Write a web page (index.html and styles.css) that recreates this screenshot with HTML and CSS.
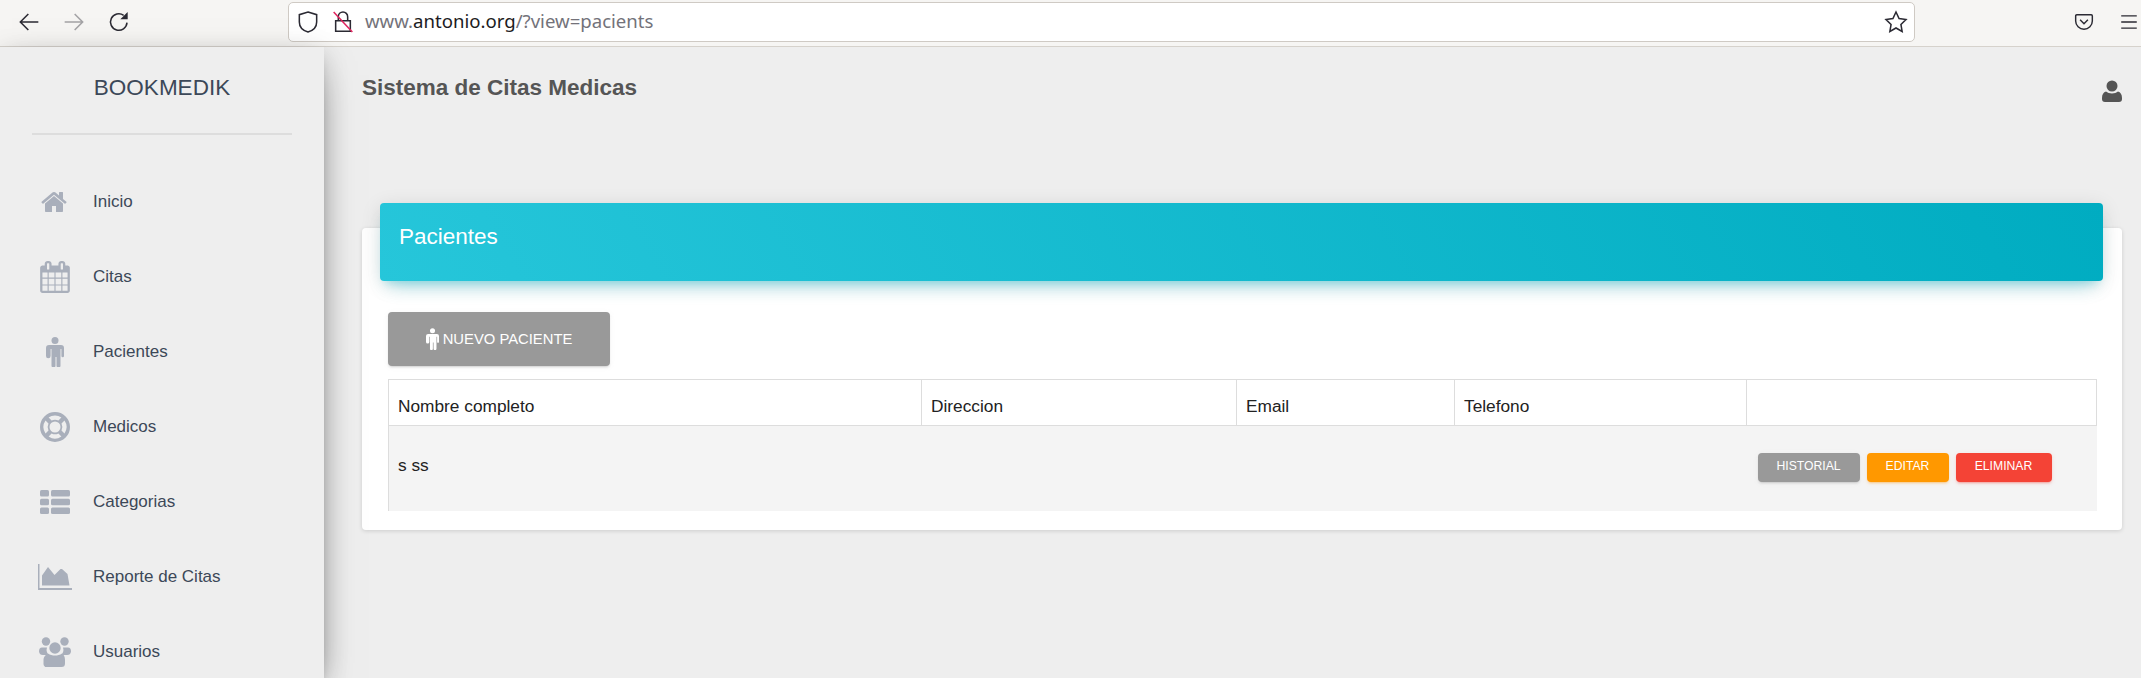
FILE: index.html
```html
<!DOCTYPE html>
<html lang="en">
<head>
    <meta charset="UTF-8">
    <title>BOOKMEDIK</title>
    <link rel="stylesheet" href="styles.css">
</head>
<body>
    <div class="toolbar">
        <div class="nav-btns">
            <svg class="tb-icon" viewBox="0 0 18 18"><path d="M16 9H2.500M8.500 3L2.500 9l6 6"/></svg>
            <svg class="tb-icon faded" viewBox="0 0 18 18"><path d="M2 9h13.500M9.500 3l6 6-6 6"/></svg>
            <svg class="tb-icon" viewBox="0 0 18 18"><path d="M15 9.500A6.200 6.200 0 1 1 12.500 4"/><path class="solid" d="M15.500 1.500v5.500H10z"/></svg>
        </div>
        <div class="urlbar">
            <svg class="tb-icon shield" viewBox="0 0 18 18"><path d="M9 1.500l6.500 2v5.500c0 4-3 6.500-6.500 7.500-3.500-1-6.500-3.500-6.500-7.500V3.500z"/></svg>
            <svg class="tb-icon lock" viewBox="0 0 18 18"><path d="M5.500 8V5a3.500 3.500 0 0 1 7 0v3M3.500 8h11v8h-11z"/><path class="slash" d="M2 1.500l14 15"/></svg>
            <div class="url"><span class="url-dim">www.</span>antonio.org<span class="url-dim">/?view=pacients</span></div>
            <svg class="tb-icon star" viewBox="0 0 18 18"><path d="M9 1.500l2.300 4.900 5.200.7-3.800 3.700.9 5.300L9 13.500l-4.600 2.600.9-5.300L1.500 7.100l5.200-.7z"/></svg>
        </div>
        <div class="tb-right">
            <svg class="tb-icon small" viewBox="0 0 18 18"><path d="M2.500 2.500h13a1 1 0 0 1 1 1V8a7.500 7.500 0 0 1-15 0V3.500a1 1 0 0 1 1-1zM5.500 7L9 10.500 12.500 7"/></svg>
            <svg class="tb-icon small" viewBox="0 0 18 18"><path d="M2 3.500h14M2 9h14M2 14.500h14"/></svg>
        </div>
    </div>

    <div class="app">
        <div class="sidebar">
            <div class="logo">BOOKMEDIK</div>
            <ul class="menu">
                <li>
                    <span class="ico"><svg width="28" height="28" viewBox="0 0 1792 1792"><path d="M1408 992v480q0 26-19 45t-45 19h-384v-384h-256v384h-384q-26 0-45-19t-19-45v-480q0-1 .5-3t.5-3l575-474 575 474q1 2 1 6zm223-69l-62 74q-8 9-21 11h-3q-13 0-21-7l-692-577-692 577q-12 8-24 7-13-2-21-11l-62-74q-8-10-7-23.5t11-21.5l719-599q32-26 76-26t76 26l244 204v-195q0-14 9-23t23-9h192q14 0 23 9t9 23v408l219 182q10 8 11 21.5t-7 23.5z"/></svg></span>
                    Inicio
                </li>
                <li>
                    <span class="ico"><svg width="32" height="32" viewBox="0 0 1792 1792"><path d="M192 1664h288v-288h-288v288zm352 0h320v-288h-320v288zm-352-352h288v-320h-288v320zm352 0h320v-320h-320v320zm-352-384h288v-288h-288v288zm736 736h320v-288h-320v288zm-384-736h320v-288h-320v288zm768 736h288v-288h-288v288zm-384-352h320v-320h-320v320zm-352-864v-288q0-13-9.500-22.500t-22.500-9.500h-64q-13 0-22.500 9.500t-9.500 22.500v288q0 13 9.500 22.500t22.500 9.500h64q13 0 22.500-9.500t9.500-22.500zm736 864h288v-320h-288v320zm-384-384h320v-288h-320v288zm384 0h288v-288h-288v288zm32-480v-288q0-13-9.500-22.500t-22.500-9.500h-64q-13 0-22.500 9.500t-9.500 22.500v288q0 13 9.500 22.500t22.500 9.500h64q13 0 22.500-9.500t9.500-22.500zm384-64v1280q0 52-38 90t-90 38h-1408q-52 0-90-38t-38-90v-1280q0-52 38-90t90-38h128v-96q0-66 47-113t113-47h64q66 0 113 47t47 113v96h384v-96q0-66 47-113t113-47h64q66 0 113 47t47 113v96h128q52 0 90 38t38 90z"/></svg></span>
                    Citas
                </li>
                <li>
                    <span class="ico"><svg width="18" height="30" viewBox="0 0 18 30"><circle cx="9" cy="3.500" r="3.500"/><path d="M3 8h12a3 3 0 0 1 3 3v8a1.300 1.300 0 0 1-2.600 0v-7h-.9v16.500a1.500 1.500 0 0 1-4 0V20h-1v8.500a1.500 1.500 0 0 1-4 0V12h-.9v7A1.300 1.300 0 0 1 0 19v-8a3 3 0 0 1 3-3z"/></svg></span>
                    Pacientes
                </li>
                <li>
                    <span class="ico"><svg width="30" height="30" viewBox="0 0 30 30"><path fill-rule="evenodd" d="M15 0a15 15 0 1 1 0 30 15 15 0 0 1 0-30zm0 3.500c-2.400 0-4.600.7-6.400 2l3 3a7.600 7.600 0 0 1 6.800 0l3-3a11.400 11.400 0 0 0-6.400-2zM5.500 8.600a11.400 11.400 0 0 0 0 12.800l3-3a7.600 7.600 0 0 1 0-6.800zm19 0l-3 3a7.600 7.600 0 0 1 0 6.800l3 3a11.400 11.400 0 0 0 0-12.800zM11.600 21.500l-3 3a11.400 11.400 0 0 0 12.800 0l-3-3a7.600 7.600 0 0 1-6.800 0zM15 9.500a5.500 5.500 0 1 0 0 11 5.500 5.500 0 0 0 0-11z"/></svg></span>
                    Medicos
                </li>
                <li>
                    <span class="ico"><svg width="30" height="24" viewBox="0 0 30 24"><rect width="9" height="6.500" rx="1.500"/><rect x="11" width="19" height="6.500" rx="1.500"/><rect y="8.700" width="9" height="6.500" rx="1.500"/><rect x="11" y="8.700" width="19" height="6.500" rx="1.500"/><rect y="17.400" width="9" height="6.500" rx="1.500"/><rect x="11" y="17.400" width="19" height="6.500" rx="1.500"/></svg></span>
                    Categorias
                </li>
                <li>
                    <span class="ico"><svg width="34" height="26" viewBox="0 0 34 26"><path d="M0 0h1.500v24H34v2H0z"/><path d="M4 21.500v-10L10 3l6.500 8 6-6 1.500 0 5.500 5 2 11.500z"/></svg></span>
                    Reporte de Citas
                </li>
                <li>
                    <span class="ico"><svg width="32" height="30" viewBox="0 0 32 30"><circle cx="7" cy="4.500" r="4.200"/><circle cx="25.500" cy="4.500" r="4.200"/><circle cx="16" cy="11" r="5.700"/><path d="M3 10.500h5a7.500 7.500 0 0 0 1.800 7.500H4a4 4 0 0 1-4-3.500C0 12 1 10.500 3 10.500zM24 10.500h5c2 0 3 1.500 3 4a4 4 0 0 1-4 3.500h-5.800A7.500 7.500 0 0 0 24 10.500z"/><path d="M9 16.500c2 1.500 4.500 2 7 2s5-.5 7-2c1.500.5 3 3 3 6.500v3.500a3.500 3.500 0 0 1-3.500 3.500h-13A3.500 3.500 0 0 1 4.500 26.500V23c0-3.500 3-6 4.500-6.500z"/></svg></span>
                    Usuarios
                </li>
            </ul>
        </div>

        <div class="main">
            <div class="topnav">
                <div class="brand">Sistema de Citas Medicas</div>
                <svg class="user" width="20" height="22" viewBox="0 0 20 22"><circle cx="10" cy="6" r="5.500"/><path d="M4 11.500c1.500 1.300 3.700 2 6 2s4.500-.7 6-2c2.500.5 4 3 4 6.500v1a3 3 0 0 1-3 3H3a3 3 0 0 1-3-3v-1c0-3.500 1.500-6 4-6.500z"/></svg>
            </div>

            <div class="card">
                <div class="card-header">Pacientes</div>
                <div class="card-body">
                    <a class="btn btn-big">
                        <svg width="13" height="22" viewBox="0 0 18 30"><circle cx="9" cy="3.500" r="3.500"/><path d="M3 8h12a3 3 0 0 1 3 3v8a1.300 1.300 0 0 1-2.600 0v-7h-.9v16.500a1.500 1.500 0 0 1-4 0V20h-1v8.500a1.500 1.500 0 0 1-4 0V12h-.9v7A1.300 1.300 0 0 1 0 19v-8a3 3 0 0 1 3-3z"/></svg>
                        NUEVO PACIENTE
                    </a>
                    <table class="tbl">
                        <colgroup>
                            <col class="c1"><col class="c2"><col class="c3"><col class="c4"><col>
                        </colgroup>
                        <thead>
                            <tr>
                                <th>Nombre completo</th>
                                <th>Direccion</th>
                                <th>Email</th>
                                <th>Telefono</th>
                                <th></th>
                            </tr>
                        </thead>
                        <tbody>
                            <tr>
                                <td class="first">s ss</td>
                                <td></td>
                                <td></td>
                                <td></td>
                                <td class="actions">
                                    <a class="btn btn-sm grey">HISTORIAL</a>
                                    <a class="btn btn-sm orange">EDITAR</a>
                                    <a class="btn btn-sm red">ELIMINAR</a>
                                </td>
                            </tr>
                        </tbody>
                    </table>
                </div>
            </div>
        </div>
    </div>
</body>
</html>
```

FILE: styles.css
```css
* {
    box-sizing: border-box;
    margin: 0;
    padding: 0;
}
html, body {
    height: 100%;
    overflow: hidden;
}
body {
    background-color: #eeeeee;
    font-family: "Liberation Sans", Arial, sans-serif;
    display: flex;
    flex-direction: column;
}

/* browser bar */
.toolbar {
    height: 47px;
    flex: none;
    background-color: #f6f5f3;
    border-bottom: 1px solid #d6d2cc;
    display: flex;
    align-items: center;
    padding-left: 17px;
    padding-bottom: 3px;
}
.tb-icon {
    width: 24px;
    height: 24px;
    fill: none;
    stroke: #2b2a33;
    stroke-width: 1.15;
    flex: none;
}
.tb-icon.small {
    width: 20px;
    height: 20px;
    stroke-width: 1.3;
}
.tb-icon .solid {
    fill: #2b2a33;
    stroke: none;
}
.tb-icon .slash {
    stroke: #e0245e;
}
.faded {
    opacity: 0.4;
}
.nav-btns {
    display: flex;
    gap: 21px;
    width: 271px;
}
.urlbar {
    width: 1627px;
    height: 40px;
    background: #fff;
    border: 1px solid #cfcac4;
    border-radius: 5px;
    display: flex;
    align-items: center;
    padding: 0 6px 0 7px;
}
.shield {
    margin-right: 11px;
}
.lock {
    margin-right: 10px;
}
.url {
    flex: 1;
    font-family: "Noto Sans", sans-serif;
    font-size: 18.6px;
    color: #1c1b22;
    margin-bottom: 2px;
}
.url-dim {
    color: #73727a;
}
.tb-right {
    display: flex;
    gap: 25px;
    margin-left: 159px;
}

/* layout */
.app {
    flex: 1;
    display: flex;
    min-height: 0;
}
.sidebar {
    width: 324px;
    flex: none;
    background-color: #eeeeee;
    box-shadow: 0 16px 38px -12px rgba(0,0,0,.56), 0 4px 25px 0 rgba(0,0,0,.12), 0 8px 10px -5px rgba(0,0,0,.2);
    position: relative;
    padding: 0 32px;
}
.logo {
    height: 88px;
    padding-top: 27px;
    border-bottom: 2px solid #dddddd;
    text-align: center;
    font-size: 22.5px;
    line-height: 28px;
    color: #3c4858;
}
.menu {
    list-style: none;
    margin: 29px 0 0 -32px;
}
.menu li {
    height: 75px;
    display: flex;
    align-items: center;
    font-size: 17px;
    color: #3c4858;
}
.ico {
    width: 110px;
    margin-right: -17px;
    display: flex;
    justify-content: center;
    flex: none;
}
.ico svg {
    fill: #a9afbb;
}
.main {
    flex: 1;
    padding: 0 19px 0 38px;
}
.topnav {
    height: 82px;
    display: flex;
    justify-content: space-between;
    align-items: flex-start;
}
.brand {
    font-size: 22.5px;
    font-weight: bold;
    color: #555555;
    line-height: 28px;
    margin-top: 27px;
}
.user {
    fill: #555555;
    margin-top: 33px;
}

/* card */
.card {
    margin-top: 99px;
    height: 302px;
    background: #fff;
    border-radius: 4px;
    box-shadow: 0 1px 4px 0 rgba(0,0,0,.14);
    padding: 0 19px 0 18px;
}
.card-header {
    position: relative;
    top: -25px;
    margin-bottom: -25px;
    height: 78px;
    padding: 20px 19px;
    border-radius: 4px;
    background: linear-gradient(60deg, #26c6da, #00acc1);
    box-shadow: 0 12px 20px -10px rgba(0,188,212,.4), 0 4px 20px 0 rgba(0,0,0,.12), 0 7px 8px -5px rgba(0,188,212,.2);
    color: #fff;
    font-size: 22.5px;
    line-height: 28px;
}
.card-body {
    padding: 31px 6px 0 8px;
}
.btn {
    display: inline-flex;
    align-items: center;
    justify-content: center;
    color: #fff;
    border-radius: 4px;
    background-color: #999999;
    box-shadow: 0 2px 2px 0 rgba(153,153,153,.14), 0 3px 1px -2px rgba(153,153,153,.2), 0 1px 5px 0 rgba(153,153,153,.12);
}
.btn-big {
    width: 222px;
    height: 54px;
    font-size: 14.8px;
    gap: 4px;
}
.btn-big svg {
    fill: #fff;
}
.tbl {
    width: 100%;
    margin-top: 13px;
    border-collapse: collapse;
    table-layout: fixed;
    font-size: 17.3px;
    color: #222222;
}
.c1 { width: 533px; }
.c2 { width: 315px; }
.c3 { width: 218px; }
.c4 { width: 292px; }
.tbl th {
    height: 46px;
    border: 1px solid #dddddd;
    font-weight: normal;
    text-align: left;
    padding: 0 9px 8px;
    vertical-align: bottom;
}
.tbl td {
    height: 85px;
    background-color: #f4f4f4;
    padding: 0 9px 5px;
}
.tbl td.first {
    border-left: 1px solid #dddddd;
}
.actions {
    white-space: nowrap;
    font-size: 0;
}
.btn-sm {
    height: 29px;
    font-size: 12.2px;
    padding-bottom: 2px;
    margin-right: 7px;
    margin-top: 3px;
}
.grey {
    width: 102px;
    margin-left: 2px;
}
.orange {
    width: 82px;
    background-color: #ff9800;
    box-shadow: 0 2px 2px 0 rgba(255,152,0,.14), 0 3px 1px -2px rgba(255,152,0,.2), 0 1px 5px 0 rgba(255,152,0,.12);
}
.red {
    width: 96px;
    background-color: #f44336;
    box-shadow: 0 2px 2px 0 rgba(244,67,54,.14), 0 3px 1px -2px rgba(244,67,54,.2), 0 1px 5px 0 rgba(244,67,54,.12);
}
```
